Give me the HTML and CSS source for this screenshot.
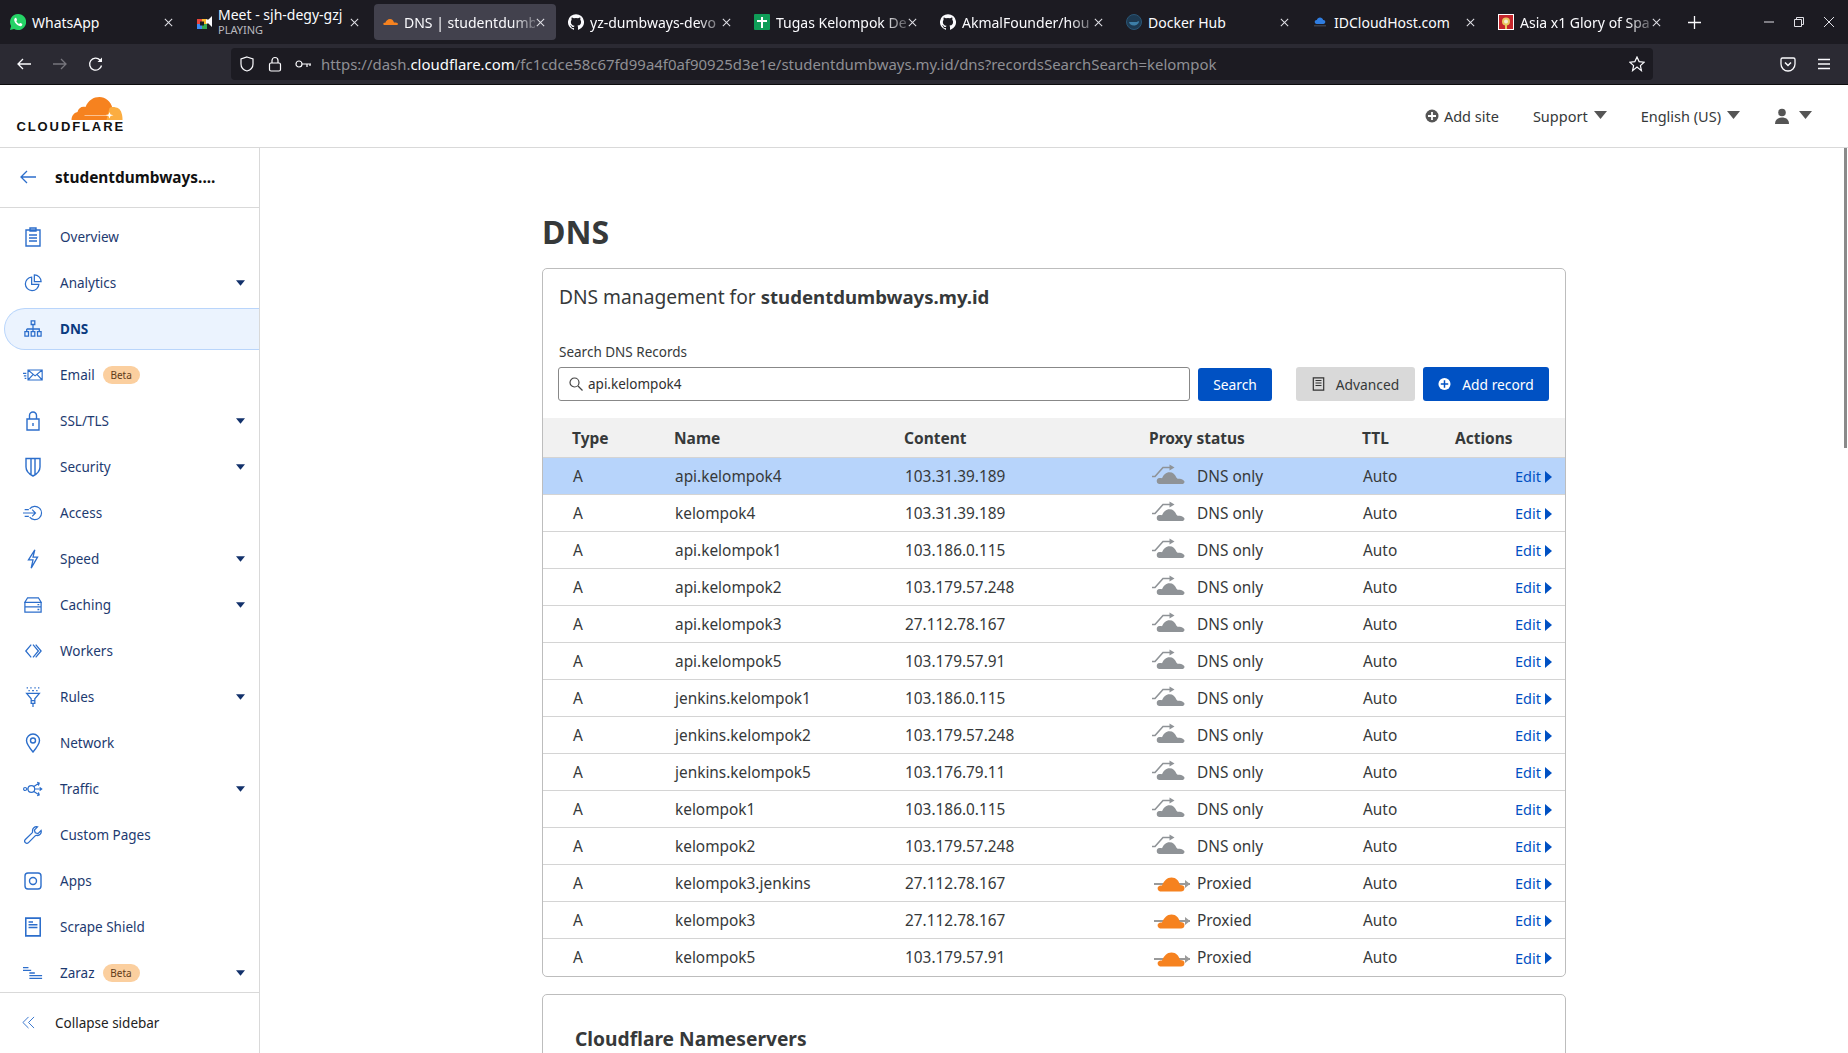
FILE: index.html
```html
<!DOCTYPE html>
<html lang="en">
<head>
    <meta charset="UTF-8">
    <title>DNS | studentdumbways.my.id</title>
    <link rel="stylesheet" href="styles.css">
</head>
<body>
    <svg class="defs" width="0" height="0">
        <symbol id="close" viewBox="0 0 12 12"><path d="M2 2l8 8M10 2l-8 8" fill="none" stroke="currentColor" stroke-width="1.1"/></symbol>
        <symbol id="github" viewBox="0 0 24 24"><path fill="#fbfbfe" d="M12 .3a12 12 0 0 0-3.8 23.4c.6.1.8-.3.8-.6v-2c-3.3.7-4-1.6-4-1.6-.6-1.4-1.4-1.8-1.4-1.8-1-.7.1-.7.1-.7 1.2 0 1.9 1.2 1.9 1.2 1 1.8 2.8 1.3 3.5 1 0-.8.4-1.3.7-1.6-2.7-.3-5.5-1.3-5.5-6 0-1.2.5-2.3 1.3-3.1-.2-.4-.6-1.6 0-3.2 0 0 1-.3 3.4 1.2a11.5 11.5 0 0 1 6 0c2.3-1.5 3.3-1.2 3.3-1.2.6 1.6.2 2.8 0 3.2.9.8 1.3 1.9 1.3 3.2 0 4.6-2.8 5.6-5.5 5.9.5.4.9 1 .9 2.2v3.3c0 .3.1.7.8.6A12 12 0 0 0 12 .3"/></symbol>
        <symbol id="caret" viewBox="0 0 10 6"><path d="M0 0h10L5 6z" fill="currentColor"/></symbol>
        <symbol id="cloud-off" viewBox="0 0 34 22"><path fill="none" stroke="#8f9397" stroke-width="1.6" d="M0 13.500h3L11 4.500h8"/><path fill="#8f9397" d="M17.500 1.500l5 3-5 3z"/><path fill="#8f9397" d="M8 21a3 3 0 0 1-.5-6c1-.2 2 0 2.500.2 1.500-3.500 4-6 7.500-6 3.500 0 5.500 2 7 5.500.6 1 1.500 1 2.500 1 2.500 0 5.500 1.500 5.500 3 0 1.500-1.200 2.300-3 2.300z"/></symbol>
        <symbol id="cloud-on" viewBox="0 0 36 16"><path stroke="#9a9a9a" stroke-width="2" d="M0 8h36"/><path fill="#9a9a9a" d="M31 4l5 4-5 4z"/><path fill="#f6821f" d="M6 15.500a3 3 0 0 1-1-5.500c1-.5 2-.5 3-.5C10 5 13 1.500 17.500 1.500S25 5 26 9c3 0 4.500 1 4.500 3 0 2.500-1.500 3.500-3.500 3.500z"/></symbol>
    </svg>

    <div class="tabbar">
        <div class="tab">
            <svg class="favicon" viewBox="0 0 16 16"><path fill="#25d366" d="M8 0a8 8 0 0 0-6.900 12L0 16l4.100-1.100A8 8 0 1 0 8 0z"/><path fill="#fff" d="M5.500 3.800c-.9.500-1.500 1.500-1.200 2.900.5 2.200 3 4.800 5.200 5.400 1.300.3 2.300-.3 2.700-1.200.2-.5.100-.9-.2-1.100l-1.500-.8c-.3-.1-.6 0-.8.200l-.5.700c-1.300-.4-2.400-1.500-2.900-2.800l.6-.6c.2-.2.200-.5.100-.8l-.6-1.500c-.2-.4-.5-.5-.9-.4z"/></svg>
            <span class="tab-title">WhatsApp</span>
            <svg class="tab-close"><use href="#close"/></svg>
        </div>
        <div class="tab">
            <svg class="favicon meet" viewBox="0 0 18 18"><rect x="1" y="6" width="5" height="5" fill="#e8453c"/><rect x="6" y="6" width="5" height="5" fill="#f9bb2d"/><rect x="1" y="11" width="5" height="5" fill="#3c8bf5"/><rect x="6" y="11" width="5" height="5" fill="#34a853"/><rect x="4" y="8.500" width="4" height="4" fill="#1c1b22"/><path fill="#fbfbfe" d="M10 6.500h2.500L16 3v11l-3.500-3.500H10z"/></svg>
            <div class="tab-title stacked">
                <span>Meet - sjh-degy-gzj</span>
                <span class="tab-sub">PLAYING</span>
            </div>
            <svg class="tab-close"><use href="#close"/></svg>
        </div>
        <div class="tab active">
            <svg class="favicon" viewBox="0 0 36 16"><path fill="#f6821f" d="M5 15a3 3 0 0 1-.5-5.500h3C9 5 13 1 18 1s8 4 9 8h4c3 0 5 2 5 3.500S34 15 33 15z"/></svg>
            <span class="tab-title fade">DNS | studentdumb</span>
            <svg class="tab-close"><use href="#close"/></svg>
        </div>
        <div class="tab">
            <svg class="favicon"><use href="#github"/></svg>
            <span class="tab-title fade">yz-dumbways-devo</span>
            <svg class="tab-close"><use href="#close"/></svg>
        </div>
        <div class="tab">
            <svg class="favicon" viewBox="0 0 16 16"><rect width="16" height="16" rx="1" fill="#0f9d58"/><path d="M7 3h2v3h4v2H9v6H7V8H3V6h4z" fill="#fff"/></svg>
            <span class="tab-title fade">Tugas Kelompok De</span>
            <svg class="tab-close"><use href="#close"/></svg>
        </div>
        <div class="tab">
            <svg class="favicon"><use href="#github"/></svg>
            <span class="tab-title fade">AkmalFounder/hou</span>
            <svg class="tab-close"><use href="#close"/></svg>
        </div>
        <div class="tab">
            <svg class="favicon" viewBox="0 0 16 16"><circle cx="8" cy="8" r="7.500" fill="#1d3a52" stroke="#2a5676"/><path fill="#3d7fa8" d="M3 8h8c.5-1 1.500-1 2-.5 0 1.500-2 4-5 4-3 0-4.500-1.500-5-3.500z"/></svg>
            <span class="tab-title">Docker Hub</span>
            <svg class="tab-close"><use href="#close"/></svg>
        </div>
        <div class="tab">
            <svg class="favicon" viewBox="0 0 16 16"><path fill="#2f7de1" d="M4.500 10a2 2 0 0 1 .3-4c.4-1.500 1.700-2.500 3.200-2.500S10.800 4.500 11.200 6a2 2 0 0 1 .3 4z"/><rect x="2" y="11" width="12" height="1.500" fill="#3a3f4a"/></svg>
            <span class="tab-title">IDCloudHost.com</span>
            <svg class="tab-close"><use href="#close"/></svg>
        </div>
        <div class="tab">
            <svg class="favicon" viewBox="0 0 16 16"><rect width="16" height="16" fill="#fff"/><rect x="1" y="1" width="14" height="14" fill="#c5262c"/><circle cx="8" cy="7.500" r="4" fill="#e8c860"/><circle cx="8" cy="7.500" r="2" fill="#f5f0d8"/><rect x="7" y="11" width="2" height="4" fill="#e8c860"/></svg>
            <span class="tab-title fade">Asia x1 Glory of Spa</span>
            <svg class="tab-close"><use href="#close"/></svg>
        </div>
        <svg class="new-tab" viewBox="0 0 12 12"><path d="M6 0v12M0 6h12" stroke="#fbfbfe" stroke-width="1.200" fill="none"/></svg>
        <div class="win-controls">
            <svg viewBox="0 0 12 12"><path d="M1 6h10" stroke="#e0e0e6" fill="none"/></svg>
            <svg viewBox="0 0 12 12"><path d="M1.500 3.500h7v7h-7zM3.500 3.500v-2h7v7h-2" stroke="#e0e0e6" fill="none"/></svg>
            <svg viewBox="0 0 12 12"><path d="M1 1l10 10M11 1L1 11" stroke="#e0e0e6" fill="none"/></svg>
        </div>
    </div>

    <div class="toolbar">
        <div class="nav-buttons">
            <svg viewBox="0 0 16 16"><path d="M15 8H2M7 3L2 8l5 5" fill="none" stroke="#fbfbfe" stroke-width="1.300"/></svg>
            <svg viewBox="0 0 16 16"><path d="M1 8h13M9 3l5 5-5 5" fill="none" stroke="#77767d" stroke-width="1.300"/></svg>
            <svg viewBox="0 0 16 16"><path d="M13.500 9.500A6 6 0 1 1 12 4l1.500 1.500" fill="none" stroke="#fbfbfe" stroke-width="1.300"/><path d="M14 1.500V6H9.500z" fill="#fbfbfe"/></svg>
        </div>
        <div class="urlbar">
            <svg class="url-icon" viewBox="0 0 16 16"><path d="M8 1l6 2v5c0 3.500-2.500 6-6 7-3.500-1-6-3.500-6-7V3z" fill="none" stroke="#fbfbfe" stroke-width="1.200"/></svg>
            <svg class="url-icon" viewBox="0 0 16 16"><rect x="2.500" y="7" width="11" height="8" rx="1.500" fill="none" stroke="#fbfbfe" stroke-width="1.200"/><path d="M5 7V4.500a3 3 0 0 1 6 0V7" fill="none" stroke="#fbfbfe" stroke-width="1.200"/></svg>
            <svg class="url-icon" viewBox="0 0 16 16"><circle cx="4" cy="8" r="3" fill="none" stroke="#fbfbfe" stroke-width="1.200"/><path d="M7 8h9M12 8v3M15 8v2" fill="none" stroke="#fbfbfe" stroke-width="1.200"/></svg>
            <div class="url-text">https://dash.<b>cloudflare.com</b>/fc1cdce58c67fd99a4f0af90925d3e1e/studentdumbways.my.id/dns?recordsSearchSearch=kelompok</div>
            <svg class="url-star" viewBox="0 0 16 16"><path d="M8 1l2.100 4.600 5 .6-3.700 3.400 1 5L8 11.100 3.600 14.600l1-5L.9 6.200l5-.6z" fill="none" stroke="#fbfbfe" stroke-width="1.200"/></svg>
        </div>
        <div class="tool-right">
            <svg viewBox="0 0 16 16"><path d="M2.500 2h11A1.500 1.500 0 0 1 15 3.500V8a7 7 0 0 1-14 0V3.500A1.500 1.500 0 0 1 2.500 2z" fill="none" stroke="#fbfbfe" stroke-width="1.300"/><path d="M5 6.500L8 9.500l3-3" fill="none" stroke="#fbfbfe" stroke-width="1.500"/></svg>
            <svg viewBox="0 0 16 16"><path d="M2 3.500h12M2 8h12M2 12.500h12" fill="none" stroke="#fbfbfe" stroke-width="1.300"/></svg>
        </div>
    </div>

    <header class="site-header">
        <div class="logo">
            <svg class="logo-cloud" viewBox="0 0 52 24"><path fill="#f6821f" d="M1 24c0-4 2-7 6-8 1-4 4-6 8-5 3-7 8-10 14-10 6 0 11 4 13 11-1 4-2 8-3 12z"/><path fill="#fbad41" d="M36 24c1-4 2-8 3-12 1-1 2-1 3-1 5 0 8 2 9 6 1 3 1 5 1 7z"/><path d="M14 19h21l3-.5 1-2.500 1 2.500 3 .8-3 .7-1 2.500-1-2.500-3-.5H14z" fill="#fff"/></svg>
            <span class="logo-text">CLOUDFLARE</span>
        </div>
        <div class="header-links">
            <span class="header-link"><svg class="add-icon" viewBox="0 0 14 14"><circle cx="7" cy="7" r="6.500" fill="#555"/><path d="M7 3v8M3 7h8" stroke="#fff" stroke-width="1.800"/></svg>Add site</span>
            <span class="header-link spaced">Support<svg class="head-caret"><use href="#caret"/></svg></span>
            <span class="header-link spaced">English (US)<svg class="head-caret"><use href="#caret"/></svg></span>
            <span class="header-link spaced"><svg class="user-icon" viewBox="0 0 16 16"><circle cx="8" cy="4.500" r="3.800" fill="#555"/><path d="M1 16c0-4.500 3-6.500 7-6.500s7 2 7 6.500z" fill="#555"/></svg><svg class="head-caret user-caret"><use href="#caret"/></svg></span>
        </div>
    </header>

    <div class="layout">
        <aside class="sidebar">
            <div class="side-head">
                <svg class="back-arrow" viewBox="0 0 16 14"><path d="M16 7H1.500M7 1L1 7l6 6" fill="none" stroke="#2c6ecb" stroke-width="1.300"/></svg>
                <span>studentdumbways....</span>
            </div>
            <nav class="side-nav">
                <a class="side-item">
                    <svg class="side-icon" viewBox="0 0 18 20"><path d="M2 3h14v16H2zM6 1h6v3H6zM5 8h8M5 11h8M5 14h8"/></svg>Overview
                </a>
                <a class="side-item">
                    <svg class="side-icon" viewBox="0 0 20 20"><path d="M8.500 3.500a7.500 7.500 0 1 0 8 8h-8zM11.500 1a7.500 7.500 0 0 1 7.500 7.500h-7.500z"/></svg>Analytics<svg class="side-caret"><use href="#caret"/></svg>
                </a>
                <a class="side-item active">
                    <svg class="side-icon" viewBox="0 0 20 20"><path d="M8 1h4v4H8zM10 5v5M3 10h14v3M3 10v3M10 10v3M1 13h4v5H1zM8 13h4v5H8zM15 13h4v5h-4z"/></svg>DNS
                </a>
                <a class="side-item">
                    <svg class="side-icon wide" viewBox="0 0 24 14"><path d="M6 1h17v12H6zM6 1l8.500 7L23 1M6 13l6-6.500M23 13l-6-6.500M0 5h4M1 8h3M2 11h2"/></svg>Email<span class="beta">Beta</span>
                </a>
                <a class="side-item">
                    <svg class="side-icon" viewBox="0 0 18 20"><path d="M3 8h12v11H3zM5.500 8V4.500a3.500 3.500 0 0 1 7 0V8M9 12v3"/></svg>SSL/TLS<svg class="side-caret"><use href="#caret"/></svg>
                </a>
                <a class="side-item">
                    <svg class="side-icon" viewBox="0 0 18 20"><path d="M2 1.500h14V10c0 4-3 7-7 9-4-2-7-5-7-9zM7 1.500V17M11 1.500V17"/></svg>Security<svg class="side-caret"><use href="#caret"/></svg>
                </a>
                <a class="side-item">
                    <svg class="side-icon wide" viewBox="0 0 24 18"><path d="M0 9h15M11 5l4 4-4 4M8 4a8 8 0 1 1 0 10M2 5h5M2 13h5"/></svg>Access
                </a>
                <a class="side-item">
                    <svg class="side-icon" viewBox="0 0 18 22"><path d="M11 1L4 12h5l-2 9 7-12H9z"/></svg>Speed<svg class="side-caret"><use href="#caret"/></svg>
                </a>
                <a class="side-item">
                    <svg class="side-icon" viewBox="0 0 20 18"><path d="M4 1h12l3 5H1zM1 6h18v5H1zM1 11h18v6H1zM15 8.500h2M15 14h2"/></svg>Caching<svg class="side-caret"><use href="#caret"/></svg>
                </a>
                <a class="side-item">
                    <svg class="side-icon" viewBox="0 0 20 18"><path d="M8 2L2 9l6 7M10 2l6 7-6 7M13 2l6 7-6 7"/></svg>Workers
                </a>
                <a class="side-item">
                    <svg class="side-icon" viewBox="0 0 16 22"><path d="M1 1h1.500M5 1h1.500M9.500 1H11M13.500 1H15M3 4h1.500M7 4h2M11.500 4H13M1 7h14L10 13v5H6v-5zM6 15h4M8 18v4"/></svg>Rules<svg class="side-caret"><use href="#caret"/></svg>
                </a>
                <a class="side-item">
                    <svg class="side-icon" viewBox="0 0 16 20"><path d="M8 19C3 13 1.500 10 1.500 7.500a6.500 6.500 0 0 1 13 0C14.500 10 13 13 8 19z"/><circle cx="8" cy="7.500" r="2.500"/></svg>Network
                </a>
                <a class="side-item">
                    <svg class="side-icon wide" viewBox="0 0 24 20"><circle cx="2.500" cy="10" r="1.800"/><circle cx="10" cy="10" r="4"/><path d="M4.500 10H6M14 10h8M20 8l2.500 2-2.500 2M13 7l6-4M17 2l2.500 1-1 3M13 13l6 4M17 18l2.500-1-1-3"/></svg>Traffic<svg class="side-caret"><use href="#caret"/></svg>
                </a>
                <a class="side-item">
                    <svg class="side-icon" viewBox="0 0 20 20"><path d="M19 5l-3.500 3.500-3-1-1-3L15 1c-3-.8-6 1.500-5.500 5 .1.700.1 1-.5 1.600L1.500 15c-1 1-1 2.500 0 3.500s2.500 1 3.500 0l7.400-7.500c.6-.6.900-.6 1.600-.5 3.500.5 5.800-2.500 5-5.500z"/></svg>Custom Pages
                </a>
                <a class="side-item">
                    <svg class="side-icon" viewBox="0 0 18 18"><rect x="1" y="1" width="16" height="16" rx="3"/><circle cx="9" cy="9" r="3.500"/></svg>Apps
                </a>
                <a class="side-item">
                    <svg class="side-icon" viewBox="0 0 16 18"><path d="M1.500 1h13v16h-13zM4 4.500h4M4 7h8M4 9.500h8"/></svg>Scrape Shield
                </a>
                <a class="side-item">
                    <svg class="side-icon wide" viewBox="0 0 22 14"><path d="M0 1h6M0 4h9M7 7h6M7 10h14M7 13h14"/></svg>Zaraz<span class="beta">Beta</span><svg class="side-caret"><use href="#caret"/></svg>
                </a>
            </nav>
            <div class="side-foot">
                <svg class="collapse-icon" viewBox="0 0 14 14"><path d="M7 1L1 7l6 6M13 1L7 7l6 6" fill="none" stroke="#2c6ecb" stroke-width="1"/></svg>
                <span>Collapse sidebar</span>
            </div>
        </aside>

        <main class="main">
            <div class="content">
                <h1 class="page-title">DNS</h1>
                <section class="card">
                    <h2 class="card-title">DNS management for <b>studentdumbways.my.id</b></h2>
                    <label class="search-label">Search DNS Records</label>
                    <div class="search-row">
                        <div class="search-box">
                            <svg class="search-icon" viewBox="0 0 14 14"><circle cx="5.500" cy="5.500" r="4.500" fill="none" stroke="#444" stroke-width="1.200"/><path d="M9 9l4.500 4.500" stroke="#444" stroke-width="1.200"/></svg>
                            <span>api.kelompok4</span>
                        </div>
                        <button class="btn btn-blue btn-search">Search</button>
                        <button class="btn btn-grey"><svg class="btn-icon" viewBox="0 0 12 14"><path d="M.8.800h10.400v12.400H.8zM3 3.500h6M3 6h6M3 8.500h6" fill="none" stroke="#333" stroke-width="1.200"/></svg>Advanced</button>
                        <button class="btn btn-blue btn-add"><svg class="btn-icon" viewBox="0 0 14 14"><circle cx="7" cy="7" r="6.500" fill="#fff"/><path d="M7 3v8M3 7h8" stroke="#0051c3" stroke-width="1.600"/></svg>Add record</button>
                    </div>

                    <div class="dns-table">
                        <div class="dns-row dns-head">
                            <span>Type</span><span>Name</span><span>Content</span><span>Proxy status</span><span class="ttl-head">TTL</span><span>Actions</span>
                        </div>
                        <div class="dns-row selected"><span>A</span><span>api.kelompok4</span><span>103.31.39.189</span><span class="proxy"><svg class="cloud"><use href="#cloud-off"/></svg>DNS only</span><span>Auto</span><a class="edit">Edit<i class="edit-arrow"></i></a></div>
                        <div class="dns-row"><span>A</span><span>kelompok4</span><span>103.31.39.189</span><span class="proxy"><svg class="cloud"><use href="#cloud-off"/></svg>DNS only</span><span>Auto</span><a class="edit">Edit<i class="edit-arrow"></i></a></div>
                        <div class="dns-row"><span>A</span><span>api.kelompok1</span><span>103.186.0.115</span><span class="proxy"><svg class="cloud"><use href="#cloud-off"/></svg>DNS only</span><span>Auto</span><a class="edit">Edit<i class="edit-arrow"></i></a></div>
                        <div class="dns-row"><span>A</span><span>api.kelompok2</span><span>103.179.57.248</span><span class="proxy"><svg class="cloud"><use href="#cloud-off"/></svg>DNS only</span><span>Auto</span><a class="edit">Edit<i class="edit-arrow"></i></a></div>
                        <div class="dns-row"><span>A</span><span>api.kelompok3</span><span>27.112.78.167</span><span class="proxy"><svg class="cloud"><use href="#cloud-off"/></svg>DNS only</span><span>Auto</span><a class="edit">Edit<i class="edit-arrow"></i></a></div>
                        <div class="dns-row"><span>A</span><span>api.kelompok5</span><span>103.179.57.91</span><span class="proxy"><svg class="cloud"><use href="#cloud-off"/></svg>DNS only</span><span>Auto</span><a class="edit">Edit<i class="edit-arrow"></i></a></div>
                        <div class="dns-row"><span>A</span><span>jenkins.kelompok1</span><span>103.186.0.115</span><span class="proxy"><svg class="cloud"><use href="#cloud-off"/></svg>DNS only</span><span>Auto</span><a class="edit">Edit<i class="edit-arrow"></i></a></div>
                        <div class="dns-row"><span>A</span><span>jenkins.kelompok2</span><span>103.179.57.248</span><span class="proxy"><svg class="cloud"><use href="#cloud-off"/></svg>DNS only</span><span>Auto</span><a class="edit">Edit<i class="edit-arrow"></i></a></div>
                        <div class="dns-row"><span>A</span><span>jenkins.kelompok5</span><span>103.176.79.11</span><span class="proxy"><svg class="cloud"><use href="#cloud-off"/></svg>DNS only</span><span>Auto</span><a class="edit">Edit<i class="edit-arrow"></i></a></div>
                        <div class="dns-row"><span>A</span><span>kelompok1</span><span>103.186.0.115</span><span class="proxy"><svg class="cloud"><use href="#cloud-off"/></svg>DNS only</span><span>Auto</span><a class="edit">Edit<i class="edit-arrow"></i></a></div>
                        <div class="dns-row"><span>A</span><span>kelompok2</span><span>103.179.57.248</span><span class="proxy"><svg class="cloud"><use href="#cloud-off"/></svg>DNS only</span><span>Auto</span><a class="edit">Edit<i class="edit-arrow"></i></a></div>
                        <div class="dns-row"><span>A</span><span>kelompok3.jenkins</span><span>27.112.78.167</span><span class="proxy"><svg class="cloud on"><use href="#cloud-on"/></svg>Proxied</span><span>Auto</span><a class="edit">Edit<i class="edit-arrow"></i></a></div>
                        <div class="dns-row"><span>A</span><span>kelompok3</span><span>27.112.78.167</span><span class="proxy"><svg class="cloud on"><use href="#cloud-on"/></svg>Proxied</span><span>Auto</span><a class="edit">Edit<i class="edit-arrow"></i></a></div>
                        <div class="dns-row"><span>A</span><span>kelompok5</span><span>103.179.57.91</span><span class="proxy"><svg class="cloud on"><use href="#cloud-on"/></svg>Proxied</span><span>Auto</span><a class="edit">Edit<i class="edit-arrow"></i></a></div>
                    </div>
                </section>
                <section class="card card-ns">
                    <h2 class="ns-title">Cloudflare Nameservers</h2>
                </section>
            </div>
            <div class="scroll-thumb"></div>
        </main>
    </div>
</body>
</html>
```

FILE: styles.css
```css
*{
    margin:0;
    padding:0;
    box-sizing:border-box;
}
html, body{
    height:100%;
    overflow:hidden;
}
body{
    font-family:"Noto Sans", "Open Sans", sans-serif;
    font-size:13.500px;
    background-color:#fff;
    color:#313131;
    display:flex;
    flex-direction:column;
}
.defs{
    position:absolute;
}

/* browser chrome */
.tabbar{
    height:44px;
    flex:none;
    background-color:#1c1b22;
    color:#fbfbfe;
    display:flex;
    align-items:center;
    padding-left:2px;
    gap:4px;
}
.tab{
    width:182px;
    height:36px;
    flex:none;
    border-radius:4px;
    display:flex;
    align-items:center;
    padding:0 10px 0 8px;
    gap:6px;
    font-size:14px;
}
.tab.active{
    background-color:#42414d;
}
.favicon{
    width:16px;
    height:16px;
    flex:none;
}
.favicon.meet{
    width:18px;
    height:18px;
    margin-right:-2px;
}
.tab-title{
    flex:1;
    min-width:0;
    white-space:nowrap;
}
.tab-title.fade{
    margin-right:-6px;
    -webkit-mask-image:linear-gradient(to right, #000 82%, rgba(0,0,0,.25) 100%);
    mask-image:linear-gradient(to right, #000 82%, rgba(0,0,0,.25) 100%);
}
.stacked{
    display:flex;
    flex-direction:column;
    line-height:17px;
    margin-top:-2px;
}
.tab-sub{
    font-size:11px;
    line-height:14px;
    color:#b9b9be;
}
.tab-close{
    width:11px;
    height:11px;
    flex:none;
    color:#e0e0e6;
}
.new-tab{
    width:13px;
    height:13px;
    margin-left:12px;
    flex:none;
}
.win-controls{
    margin-left:auto;
    display:flex;
    gap:18px;
    padding-right:13px;
}
.win-controls svg{
    width:12px;
    height:12px;
}
.toolbar{
    height:41px;
    flex:none;
    background-color:#2b2a33;
    border-bottom:1px solid #0c0c0d;
    display:flex;
    align-items:center;
    padding-bottom:1px;
}
.nav-buttons{
    width:231px;
    flex:none;
    display:flex;
    gap:20px;
    padding-left:16px;
}
.nav-buttons svg{
    width:16px;
    height:16px;
}
.urlbar{
    width:1422px;
    height:32px;
    flex:none;
    background-color:#1c1b22;
    border-radius:4px;
    display:flex;
    align-items:center;
    padding:0 8px;
    gap:12px;
}
.url-icon{
    width:16px;
    height:16px;
    flex:none;
}
.url-text{
    flex:1;
    font-size:14.950px;
    white-space:nowrap;
    color:#8f8f94;
    margin-left:-2px;
    margin-top:1px;
}
.url-text b{
    font-weight:400;
    color:#fbfbfe;
}
.url-star{
    width:16px;
    height:16px;
    flex:none;
}
.tool-right{
    display:flex;
    gap:20px;
    padding-left:127px;
}
.tool-right svg{
    width:16px;
    height:16px;
}

/* site header */
.site-header{
    height:63px;
    flex:none;
    border-bottom:1px solid #d9d9d9;
    display:flex;
    align-items:center;
    justify-content:space-between;
    padding:0 36px 0 17px;
}
.logo{
    width:106px;
    display:flex;
    flex-direction:column;
    align-items:flex-end;
    margin-top:-3px;
}
.logo-cloud{
    width:53px;
    height:24px;
    display:block;
}
.logo-text{
    font-family:"Liberation Sans", sans-serif;
    font-weight:700;
    font-size:13px;
    line-height:14px;
    letter-spacing:1.900px;
    margin-right:-2px;
    color:#111;
}
.header-links{
    display:flex;
    align-items:center;
    color:#36393a;
    font-size:14.500px;
}
.header-link{
    display:flex;
    align-items:center;
}
.header-link.spaced{
    margin-left:34px;
}
.add-icon{
    width:14px;
    height:14px;
    margin-right:5px;
}
.head-caret{
    width:13px;
    height:8px;
    margin-left:6px;
    color:#555;
    margin-top:-2px;
}
.user-icon{
    width:16px;
    height:16px;
}
.user-caret{
    margin-left:9px;
}

/* sidebar */
.layout{
    flex:1;
    min-height:0;
    display:flex;
}
.sidebar{
    width:260px;
    flex:none;
    border-right:1px solid #d9d9d9;
    display:flex;
    flex-direction:column;
}
.side-head{
    height:60px;
    flex:none;
    border-bottom:1px solid #d9d9d9;
    display:flex;
    align-items:center;
    padding-left:20px;
    font-size:15.400px;
    font-weight:700;
    color:#111;
    padding-bottom:1px;
}
.back-arrow{
    width:16px;
    height:14px;
    margin-right:19px;
}
.side-nav{
    flex:none;
    height:784px;
    padding-top:6px;
}
.side-item{
    height:46px;
    display:flex;
    align-items:center;
    padding-left:60px;
    position:relative;
    color:#1d3a70;
}
.side-item.active{
    height:42px;
    margin:2px 0 2px 4px;
    padding-left:55px;
    background-color:#ebf3fe;
    border:1px solid #b9d5fb;
    border-right:none;
    border-radius:21px 0 0 21px;
    font-weight:700;
    color:#0a3a80;
}
.side-icon{
    position:absolute;
    left:24px;
    top:50%;
    width:18px;
    height:20px;
    transform:translateY(-50%);
    fill:none;
    stroke:#2c6ecb;
    stroke-width:1.400;
}
.side-item.active .side-icon{
    left:19px;
}
.side-icon.wide{
    left:23px;
    width:20px;
}
.side-caret{
    position:absolute;
    right:14px;
    top:50%;
    width:9px;
    height:6px;
    transform:translateY(-50%);
    color:#12316b;
}
.beta{
    margin-left:8px;
    width:37px;
    height:18px;
    border-radius:9px;
    background-color:#fbcf9f;
    color:#5f3b18;
    font-size:10px;
    display:flex;
    align-items:center;
    justify-content:center;
}
.side-foot{
    height:61px;
    flex:none;
    border-top:1px solid #d9d9d9;
    display:flex;
    align-items:center;
    padding-left:22px;
    color:#222;
    background-color:#fff;
    position:relative;
    padding-bottom:1px;
}
.collapse-icon{
    width:13px;
    height:13px;
    margin-right:20px;
}

/* main */
.main{
    flex:1;
    min-width:0;
    position:relative;
    overflow:hidden;
}
.content{
    width:1024px;
    margin:0 auto;
    padding-top:64px;
}
.page-title{
    font-size:32px;
    line-height:40px;
    font-weight:700;
    color:#36393a;
    margin-bottom:16px;
}
.card{
    border:1px solid #bdbdbd;
    border-radius:5px;
    overflow:hidden;
}
.card-title{
    font-size:19.200px;
    font-weight:400;
    line-height:28px;
    padding:14px 16px 0;
    color:#36393a;
}
.card-title b{
    font-size:18.600px;
}
.search-label{
    display:block;
    padding:31px 16px 0;
    line-height:20px;
    font-size:13.500px;
    color:#36393a;
}
.search-row{
    display:flex;
    align-items:center;
    padding:5px 16px 0;
    height:39px;
}
.search-box{
    width:632px;
    height:34px;
    border:1px solid #888;
    border-radius:3px;
    display:flex;
    align-items:center;
    padding-left:10px;
    gap:5px;
    font-size:13.500px;
    margin-left:-1px;
}
.search-icon{
    width:14px;
    height:14px;
}
.btn{
    height:34px;
    border:none;
    border-radius:3px;
    font-family:inherit;
    font-size:13.800px;
    display:flex;
    align-items:center;
    justify-content:center;
}
.btn-blue{
    background-color:#0051c3;
    color:#fff;
}
.btn-grey{
    background-color:#d9d9d9;
    color:#36393a;
    width:119px;
    margin-left:24px;
}
.btn-search{
    width:74px;
    margin-left:8px;
    height:33px;
    margin-top:1px;
}
.btn-add{
    width:126px;
    margin-left:8px;
}
.btn-icon{
    width:13px;
    height:14px;
    margin-right:11px;
}
.dns-table{
    margin-top:17px;
}
.dns-row{
    height:37px;
    display:grid;
    grid-template-columns:102px 230px 245px 213px 93px 1fr;
    align-items:center;
    padding-left:30px;
    border-bottom:1px solid #d4d4d4;
    font-size:15.400px;
    color:#36393a;
}
.dns-row:last-child{
    border-bottom:none;
}
.dns-row.selected{
    background-color:#b7d4fb;
}
.dns-head{
    height:40px;
    background-color:#f1f1f1;
    font-weight:700;
    font-size:15.500px;
}
.dns-head span:nth-child(n+2){
    margin-left:-1px;
}
.dns-head span:first-child{
    margin-left:-1px;
}
.dns-head .ttl-head{
    margin-left:-4px;
}
.proxy{
    display:flex;
    align-items:center;
}
.cloud{
    width:34px;
    height:22px;
    margin:-4px 11px 0 2px;
}
.cloud.on{
    width:36px;
    height:16px;
    margin:2px 7px 0 4px;
}
.edit{
    display:flex;
    align-items:center;
    justify-content:flex-end;
    padding-right:13px;
    color:#0051c3;
    font-size:14.500px;
}
.edit-arrow{
    width:0;
    height:0;
    margin-left:4px;
    margin-top:1px;
    border-left:7px solid #0051c3;
    border-top:6.500px solid transparent;
    border-bottom:6.500px solid transparent;
}
.card-ns{
    margin-top:17px;
    height:120px;
}
.ns-title{
    font-size:19.200px;
    font-weight:700;
    padding:30px 0 0 32px;
    line-height:28px;
    color:#36393a;
}
.scroll-thumb{
    position:absolute;
    top:-63px;
    right:1px;
    width:3px;
    height:363px;
    background-color:#8a8a8a;
}
```
